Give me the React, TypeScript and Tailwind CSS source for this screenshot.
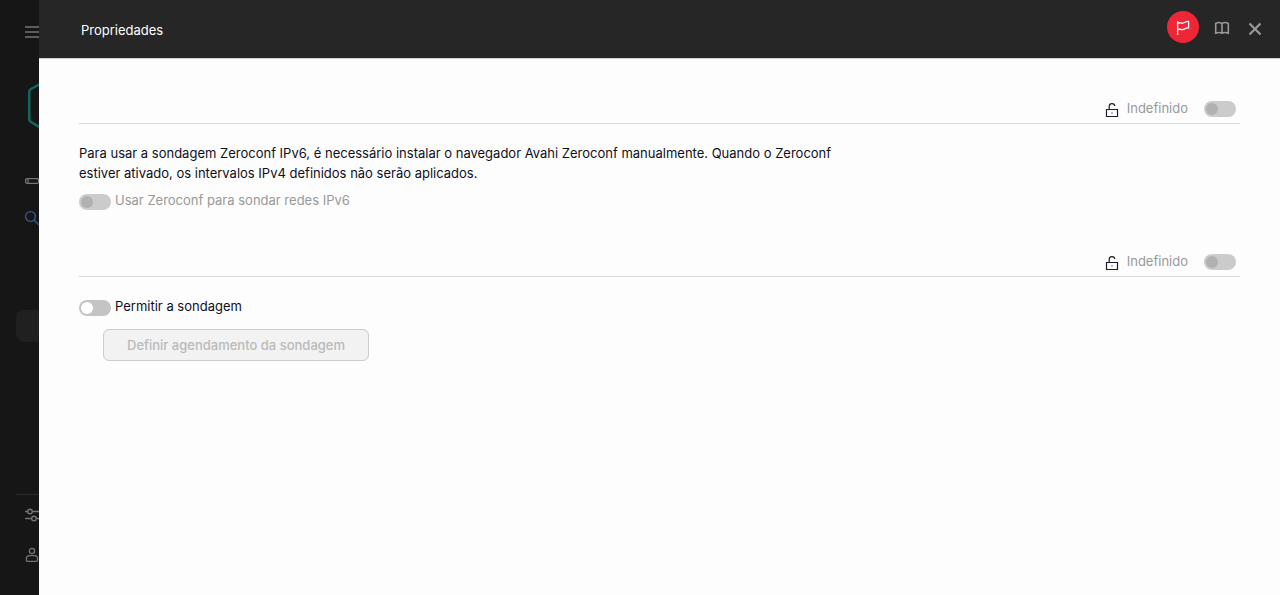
import React from "react";

type SwitchProps = {
  id: string;
  disabled?: boolean;
  label: string;
  labelClass: string;
};

const switchBase =
  "relative h-4 w-8 shrink-0 cursor-pointer appearance-none rounded-full bg-[#c4c4c4] before:absolute before:top-0.5 before:left-0.5 before:h-3 before:w-3 before:rounded-full before:bg-white checked:bg-[#00a88e] checked:before:left-[18px] disabled:cursor-default disabled:bg-[#cbcbcb] disabled:before:bg-[#b1b1b1]";

function Switch({ id, disabled, label, labelClass }: SwitchProps) {
  return (
    <div className="flex h-5 items-start gap-1">
      <input id={id} type="checkbox" role="switch" disabled={disabled} className={`${switchBase} mt-1`} />
      <label htmlFor={id} className={labelClass}>
        {label}
      </label>
    </div>
  );
}

function LockIcon() {
  return (
    <svg width="14" height="16" viewBox="0 0 14 16" fill="none" stroke="#1d1d2b" strokeWidth="1.2" aria-hidden="true">
      <path d="M1.500 7.500h11v7h-11z" />
      <path d="M4.200 7.500V4.400C4.200 2.600 5.200 1.600 7 1.600s2.700.9 2.700 2.400" />
      <path d="M6.400 11h1.200" />
    </svg>
  );
}

function SectionHeader({ id }: { id: string }) {
  return (
    <div className="flex h-8 items-start justify-end border-b border-[#d9d9d9] pr-1">
      <span className="mt-2.5 mr-2">
        <LockIcon />
      </span>
      <label htmlFor={id} className="mt-1.5 mr-4 text-[#999999]">
        Indefinido
      </label>
      <input id={id} type="checkbox" role="switch" disabled className={`${switchBase} mt-[9px]`} />
    </div>
  );
}

function Sidebar() {
  return (
    <nav className="flex w-[39px] shrink-0 flex-col overflow-hidden bg-[#161616] text-[#757575]" aria-label="Menu">
      <button type="button" aria-label="Menu" className="mt-6 ml-6 h-4 w-4">
        <svg width="16" height="16" viewBox="0 0 16 16" stroke="currentColor" strokeWidth="1.5">
          <path d="M1 3h15M1 8h15M1 13h15" />
        </svg>
      </button>
      <svg className="mt-[38px] ml-7 shrink-0" width="48" height="56" viewBox="0 0 48 56" fill="none" stroke="#11695c" strokeWidth="2.500" aria-hidden="true">
        <path d="M22 .8 3 11q-1.800 1-1.800 3v27q0 2 1.800 3l19 11.200q2 1 4 0L45 44q1.800-1 1.800-3V14q0-2-1.800-3L26 .8q-2-1-4 0z" />
      </svg>
      <a href="#servidor" aria-label="Servidor" className="mt-[39px] ml-6 h-4 w-4">
        <svg width="16" height="16" viewBox="0 0 16 16" fill="none" stroke="currentColor" strokeWidth="1.300">
          <rect x="1.600" y="5.600" width="13" height="4.800" rx="1.500" />
          <path d="M4 6v4" />
        </svg>
      </a>
      <a href="#pesquisar" aria-label="Pesquisar" className="mt-[21px] ml-6 h-4 w-4 text-[#375587]">
        <svg width="16" height="16" viewBox="0 0 16 16" fill="none" stroke="currentColor" strokeWidth="1.400">
          <circle cx="6.500" cy="6.500" r="4.900" />
          <path d="m10 10 5 5" />
        </svg>
      </a>
      <div className="mt-[84px] ml-4 h-8 w-full shrink-0 rounded-lg bg-[#202020]" />
      <div className="mt-auto mb-8">
        <hr className="ml-4 border-[#2b2b2b]" />
        <a href="#configuracoes" aria-label="Configurações" className="mt-3 ml-6 block h-4 w-4">
          <svg width="16" height="16" viewBox="0 0 16 16" fill="none" stroke="currentColor" strokeWidth="1.400">
            <circle cx="6" cy="4.500" r="2.300" />
            <circle cx="10" cy="11.500" r="2.300" />
            <path d="M1 4.500h2.700M8.300 4.500H16M1 11.500h6.700M12.300 11.500H16" />
          </svg>
        </a>
        <a href="#conta" aria-label="Conta" className="mt-6 ml-6 block h-4 w-4">
          <svg width="16" height="16" viewBox="0 0 16 16" fill="none" stroke="currentColor" strokeWidth="1.300">
            <circle cx="8" cy="4" r="2.600" />
            <path d="M5.500 8.600h5q3.100 0 3.100 3v1.300q0 1.500-1.500 1.500H3.900q-1.500 0-1.500-1.500v-1.300q0-3 3.100-3z" />
          </svg>
        </a>
      </div>
    </nav>
  );
}

export default function App() {
  return (
    <div className="flex min-h-screen bg-[#fdfdfd] font-['Inter','Liberation_Sans',sans-serif] text-[13px] leading-5 text-[#10101c]">
      <Sidebar />
      <div className="flex min-w-0 flex-1 flex-col">
        <header className="flex h-[59px] items-center border-b border-[#cfcfcf] bg-[#262626] pr-[17px] pl-[42px]">
          <h1 className="mt-0.5 flex-1 text-white">Propriedades</h1>
          <div className="mb-1 flex items-center">
            <button type="button" aria-label="Notificações" className="flex h-8 w-8 items-center justify-center rounded-full bg-[#ee2737]">
              <svg width="16" height="16" viewBox="0 0 16 16" fill="none" stroke="#ffffff" strokeWidth="1.300">
                <path d="M2.600 2v14" />
                <path d="M2.600 4.200C5 2.900 6 4.700 8.300 4c2-.6 3-2 5.300-1.500v6.400c-2.300-.5-3.300 1-5.300 1.600-2.300.6-3.300-1.100-5.700.2" />
              </svg>
            </button>
            <button type="button" aria-label="Ajuda" className="mt-0.5 ml-[15px] h-4 w-4 text-[#999999]">
              <svg width="16" height="16" viewBox="0 0 16 16" fill="none" stroke="currentColor" strokeWidth="1.600">
                <path d="M8 3.700C6.500 2.500 3.500 2.500 1.700 3.500v9.700c1.800-.7 4.800-.7 6.300 0 1.500-.7 4.500-.7 6.300 0V3.500C12.500 2.500 9.500 2.500 8 3.700zM8 3.700v9.500" />
              </svg>
            </button>
            <button type="button" aria-label="Fechar" className="mt-1 ml-[17px] h-4 w-4 text-[#999999]">
              <svg width="16" height="16" viewBox="0 0 16 16" stroke="currentColor" strokeWidth="2.200">
                <path d="m2.500 2.500 11 11M13.500 2.500l-11 11" />
              </svg>
            </button>
          </div>
        </header>
        <main className="px-10 pt-[33px] pb-10">
          <section>
            <SectionHeader id="zeroconf-lock" />
            <p className="mt-[19px] max-w-[770px]">
              Para usar a sondagem Zeroconf IPv6, é necessário instalar o navegador Avahi Zeroconf manualmente. Quando o Zeroconf
              estiver ativado, os intervalos IPv4 definidos não serão aplicados.
            </p>
            <div className="mt-[7px]">
              <Switch id="zeroconf" disabled label="Usar Zeroconf para sondar redes IPv6" labelClass="text-[#999999]" />
            </div>
          </section>
          <section className="mt-[35px]">
            <SectionHeader id="polling-lock" />
            <div className="mt-[19px]">
              <Switch id="polling" label="Permitir a sondagem" labelClass="text-[#10101c]" />
            </div>
            <button type="button" disabled className="mt-[13px] ml-6 flex h-8 items-center rounded-md border border-[#cccccc] bg-[#f2f2f2] px-[23px] font-medium text-[#bababa]">
              Definir agendamento da sondagem
            </button>
          </section>
        </main>
      </div>
    </div>
  );
}
